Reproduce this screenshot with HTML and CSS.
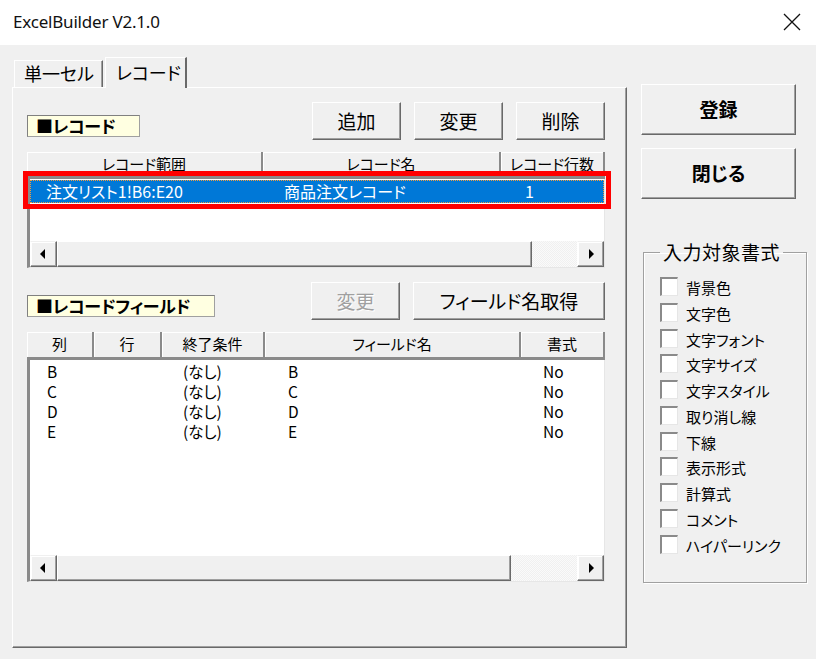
FILE: index.html
```html
<!DOCTYPE html>
<html lang="ja">
<head>
<meta charset="utf-8">
<link rel="stylesheet" href="styles.css">
</head>
<body>
<div class="window">
  <div class="titlebar">
    <span class="title">ExcelBuilder V2.1.0</span>
    <svg class="close" width="18" height="18" viewBox="0 0 18 18"><path d="M1 1 L17 17 M17 1 L1 17" stroke="#111" stroke-width="1.3" fill="none"/></svg>
  </div>
  <div class="client">
    <div class="tabctl">
      <div class="tabs">
        <div class="tab">単一セル</div>
        <div class="tab active">レコード</div>
      </div>
      <div class="panel">
        <div class="ctlrow">
          <div class="caption c1">■レコード</div>
          <div class="btns">
            <button class="btn w89">追加</button>
            <button class="btn w89">変更</button>
            <button class="btn w89">削除</button>
          </div>
        </div>
        <div class="list list1">
          <div class="lvhead">
            <div class="hc" style="width:236px">レコード範囲</div>
            <div class="hc" style="width:238px">レコード名</div>
            <div class="hc" style="width:104px">レコード行数</div>
          </div>
          <div class="lvframe">
            <div class="lvbody">
              <div class="row sel">
                <span class="cell" style="width:234px;padding-left:16px">注文リスト1!B6:E20</span>
                <span class="cell" style="width:238px;padding-left:20px">商品注文レコード</span>
                <span class="cell" style="width:100px;padding-left:23px">1</span>
              </div>
            </div>
            <div class="hscroll">
              <div class="sbtn"><span class="tri-l"></span></div>
              <div class="thumb" style="width:475px"></div>
              <div class="track"></div>
              <div class="sbtn"><span class="tri-r"></span></div>
            </div>
          </div>
          <div class="redbox"></div>
        </div>

        <div class="ctlrow r2">
          <div class="caption c2">■レコードフィールド</div>
          <div class="btns">
            <button class="btn w89 disabled">変更</button>
            <button class="btn w192">フィールド名取得</button>
          </div>
        </div>
        <div class="list list2">
          <div class="lvhead">
            <div class="hc" style="width:67px">列</div>
            <div class="hc" style="width:68px">行</div>
            <div class="hc" style="width:103px">終了条件</div>
            <div class="hc" style="width:256px">フィールド名</div>
            <div class="hc" style="width:84px">書式</div>
          </div>
          <div class="lvframe">
            <div class="lvbody">
              <div class="row">
                <span class="cell" style="width:65px;padding-left:17px">B</span>
                <span class="cell" style="width:68px"></span>
                <span class="cell" style="width:103px;padding-left:20px">(なし)</span>
                <span class="cell" style="width:256px;padding-left:22px">B</span>
                <span class="cell" style="width:80px;padding-left:21px">No</span>
              </div>
              <div class="row">
                <span class="cell" style="width:65px;padding-left:17px">C</span>
                <span class="cell" style="width:68px"></span>
                <span class="cell" style="width:103px;padding-left:20px">(なし)</span>
                <span class="cell" style="width:256px;padding-left:22px">C</span>
                <span class="cell" style="width:80px;padding-left:21px">No</span>
              </div>
              <div class="row">
                <span class="cell" style="width:65px;padding-left:17px">D</span>
                <span class="cell" style="width:68px"></span>
                <span class="cell" style="width:103px;padding-left:20px">(なし)</span>
                <span class="cell" style="width:256px;padding-left:22px">D</span>
                <span class="cell" style="width:80px;padding-left:21px">No</span>
              </div>
              <div class="row">
                <span class="cell" style="width:65px;padding-left:17px">E</span>
                <span class="cell" style="width:68px"></span>
                <span class="cell" style="width:103px;padding-left:20px">(なし)</span>
                <span class="cell" style="width:256px;padding-left:22px">E</span>
                <span class="cell" style="width:80px;padding-left:21px">No</span>
              </div>
            </div>
            <div class="hscroll">
              <div class="sbtn"><span class="tri-l"></span></div>
              <div class="thumb" style="width:454px"></div>
              <div class="track"></div>
              <div class="sbtn"><span class="tri-r"></span></div>
            </div>
          </div>
        </div>
      </div>
    </div>

    <div class="side">
      <button class="btn big">登録</button>
      <button class="btn big">閉じる</button>
      <fieldset class="group">
        <legend>入力対象書式</legend>
        <div class="chk"><span class="box"></span><span class="lbl">背景色</span></div>
        <div class="chk"><span class="box"></span><span class="lbl">文字色</span></div>
        <div class="chk"><span class="box"></span><span class="lbl">文字フォント</span></div>
        <div class="chk"><span class="box"></span><span class="lbl">文字サイズ</span></div>
        <div class="chk"><span class="box"></span><span class="lbl">文字スタイル</span></div>
        <div class="chk"><span class="box"></span><span class="lbl">取り消し線</span></div>
        <div class="chk"><span class="box"></span><span class="lbl">下線</span></div>
        <div class="chk"><span class="box"></span><span class="lbl">表示形式</span></div>
        <div class="chk"><span class="box"></span><span class="lbl">計算式</span></div>
        <div class="chk"><span class="box"></span><span class="lbl">コメント</span></div>
        <div class="chk"><span class="box"></span><span class="lbl">ハイパーリンク</span></div>
      </fieldset>
    </div>
  </div>
</div>
</body>
</html>
```

FILE: styles.css
```css
* { box-sizing: border-box; }
html, body { margin: 0; padding: 0; }
body {
  width: 816px;
  height: 659px;
  overflow: hidden;
  background: #f0f0f0;
  font-family: "Noto Sans CJK JP", "Noto Sans", sans-serif;
  font-feature-settings: "palt";
  color: #000;
}
.window { width: 816px; height: 659px; background: #f0f0f0; }

.titlebar {
  height: 45px;
  background: #fff;
  display: flex;
  align-items: center;
  padding: 0 14px 0 13px;
}
.title {
  font-family: "Noto Sans", "Open Sans", sans-serif;
  font-size: 17px;
  color: #111;
  letter-spacing: -0.2px;
  margin-top: -2px;
}
.close { margin-left: auto; margin-right: 1px; margin-top: -2px; }

.client {
  display: flex;
  padding: 12px 0 0 12px;
}
.tabctl { width: 615px; }
.tabs {
  height: 30px;
  display: flex;
  align-items: flex-end;
}
.tab {
  height: 27px;
  background: #f0f0f0;
  border-top: 1px solid #fff;
  border-left: 1px solid #fff;
  border-right: 1px solid #696969;
  box-shadow: inset -1px 0 0 #a0a0a0;
  font-size: 18px;
  line-height: 25px;
  padding-left: 9px;
  width: 89px;
  margin-left: 2px;
}
.tab.active {
  height: 31px;
  width: 82px;
  margin-left: 2px;
  margin-bottom: -1px;
  padding-left: 10px;
  line-height: 28px;
  position: relative;
  z-index: 1;
  border-right: 2px solid #696969;
  box-shadow: none;
}

.panel {
  height: 561px;
  border-top: 1px solid #fff;
  border-left: 1px solid #fff;
  border-right: 1px solid #696969;
  border-bottom: 1px solid #696969;
  box-shadow: inset -1px -1px 0 #a0a0a0;
  padding: 14px 20px 0 14px;
}

.ctlrow {
  height: 38px;
  display: flex;
}
.ctlrow.r2 { margin-top: 14px; }
.caption {
  margin-top: 13px;
  height: 22px;
  background: #ffffe1;
  border-top: 1px solid #808080;
  border-left: 1px solid #808080;
  border-right: 1px solid #a0a0a0;
  border-bottom: 1px solid #a0a0a0;
  font-size: 17px;
  font-weight: bold;
  line-height: 20px;
  padding-left: 8px;
  letter-spacing: -0.3px;
  white-space: nowrap;
}
.caption.c1 { width: 113px; }
.caption.c2 { width: 188px; }
.btns {
  margin-left: auto;
  margin-right: 1px;
  display: flex;
  gap: 13px;
}
.btn {
  font-family: "Noto Sans CJK JP", sans-serif;
  font-feature-settings: "palt";
  background: #f0f0f0;
  border: none;
  border-top: 1px solid #fff;
  border-left: 1px solid #fff;
  border-right: 1px solid #696969;
  border-bottom: 1px solid #696969;
  box-shadow: inset -1px -1px 0 #a0a0a0;
  font-size: 19px;
  color: #000;
  padding: 0 0 2px 0;
  height: 38px;
  margin: 0;
}
.btn.w89 { width: 89px; }
.btn.w192 { width: 192px; }
.btn.disabled { color: #a0a0a0; text-shadow: 1px 1px 0 #fff; }

.list { position: relative; width: 578px; margin-top: 12px; }
.list1 { height: 116px; }
.list2 { height: 250px; }
.lvhead {
  display: flex;
  height: 27px;
  border-bottom: 3px solid #8a8a8a;
  background: #f0f0f0;
}
.list2 .lvhead { height: 28px; }
.hc {
  height: 100%;
  box-shadow: inset 1px 1px 0 #fff;
  border-right: 2px solid #8a8a8a;
  text-align: center;
  font-size: 15px;
  line-height: 24px;
  white-space: nowrap;
  overflow: hidden;
}
.lvframe {
  height: calc(100% - 27px);
  display: flex;
  flex-direction: column;
  border-left: 3px solid #8a8a8a;
  border-right: 1px solid #e6e6e6;
  border-bottom: 1px solid #e6e6e6;
  background: #fff;
}
.list2 .lvframe { height: calc(100% - 28px); }
.lvbody { flex: 1; padding-top: 1px; }
.list2 .lvbody { padding-top: 1px; }
.row {
  display: flex;
  height: 20px;
  font-size: 15.5px;
  line-height: 20px;
  white-space: nowrap;
}
.row.sel {
  height: 23px;
  line-height: 23px;
  font-size: 16px;
  background: #0078d7;
  color: #fff;
  outline: 1px dotted #f39c3c;
  outline-offset: -1px;
}
.cell { display: block; }

.hscroll {
  height: 26px;
  display: flex;
  background: #f0f0f0;
}
.sbtn {
  width: 27px;
  height: 26px;
  background: #f0f0f0;
  border-top: 1px solid #f0f0f0;
  border-left: 1px solid #fff;
  border-right: 1px solid #696969;
  border-bottom: 1px solid #696969;
  box-shadow: inset -1px -1px 0 #a0a0a0, inset 1px 1px 0 #fff;
  display: flex;
  align-items: center;
  justify-content: center;
}
.thumb {
  height: 26px;
  background: #f0f0f0;
  border-top: 1px solid #fff;
  border-left: 1px solid #fff;
  border-right: 1px solid #696969;
  border-bottom: 1px solid #696969;
  box-shadow: inset -1px -1px 0 #a0a0a0;
}
.track {
  flex: 1;
  background: repeating-conic-gradient(#f0f0f0 0 25%, #fafafa 0 50%) 0 0 / 2px 2px;
}
.tri-l, .tri-r { width: 0; height: 0; border-top: 5px solid transparent; border-bottom: 5px solid transparent; }
.tri-l { border-right: 5px solid #000; margin-left: -2px; }
.tri-r { border-left: 5px solid #000; margin-left: 2px; }

.redbox {
  position: absolute;
  left: -4px;
  top: 19px;
  width: 588px;
  height: 38px;
  border: 5px solid #ff0000;
  pointer-events: none;
}

.side {
  margin-left: 14px;
  padding-top: 27px;
  width: 166px;
  display: flex;
  flex-direction: column;
}
.btn.big {
  width: 155px;
  height: 51px;
  font-weight: bold;
  font-size: 19px;
}
.btn.big + .btn.big { margin-top: 13px; }
.group {
  margin: 41px 0 0 2px;
  width: 164px;
  height: 343px;
  border: 1px solid #a0a0a0;
  box-shadow: inset 1px 1px 0 #fff, 1px 1px 0 #fff;
  padding: 13px 0 0 16px;
}
.group legend {
  font-size: 19px;
  line-height: 24px;
  padding: 0 3px;
  margin-left: 0;
  letter-spacing: 0.5px;
}
.chk {
  height: 25.75px;
  display: flex;
  align-items: flex-start;
}
.box {
  width: 18px;
  height: 19px;
  background: #fff;
  border-top: 2px solid #8a8a8a;
  border-left: 2px solid #8a8a8a;
  border-right: 1px solid #e6e6e6;
  border-bottom: 1px solid #e6e6e6;
}
.lbl {
  margin-left: 8px;
  font-size: 15px;
  line-height: 22px;
  white-space: nowrap;
}
```
